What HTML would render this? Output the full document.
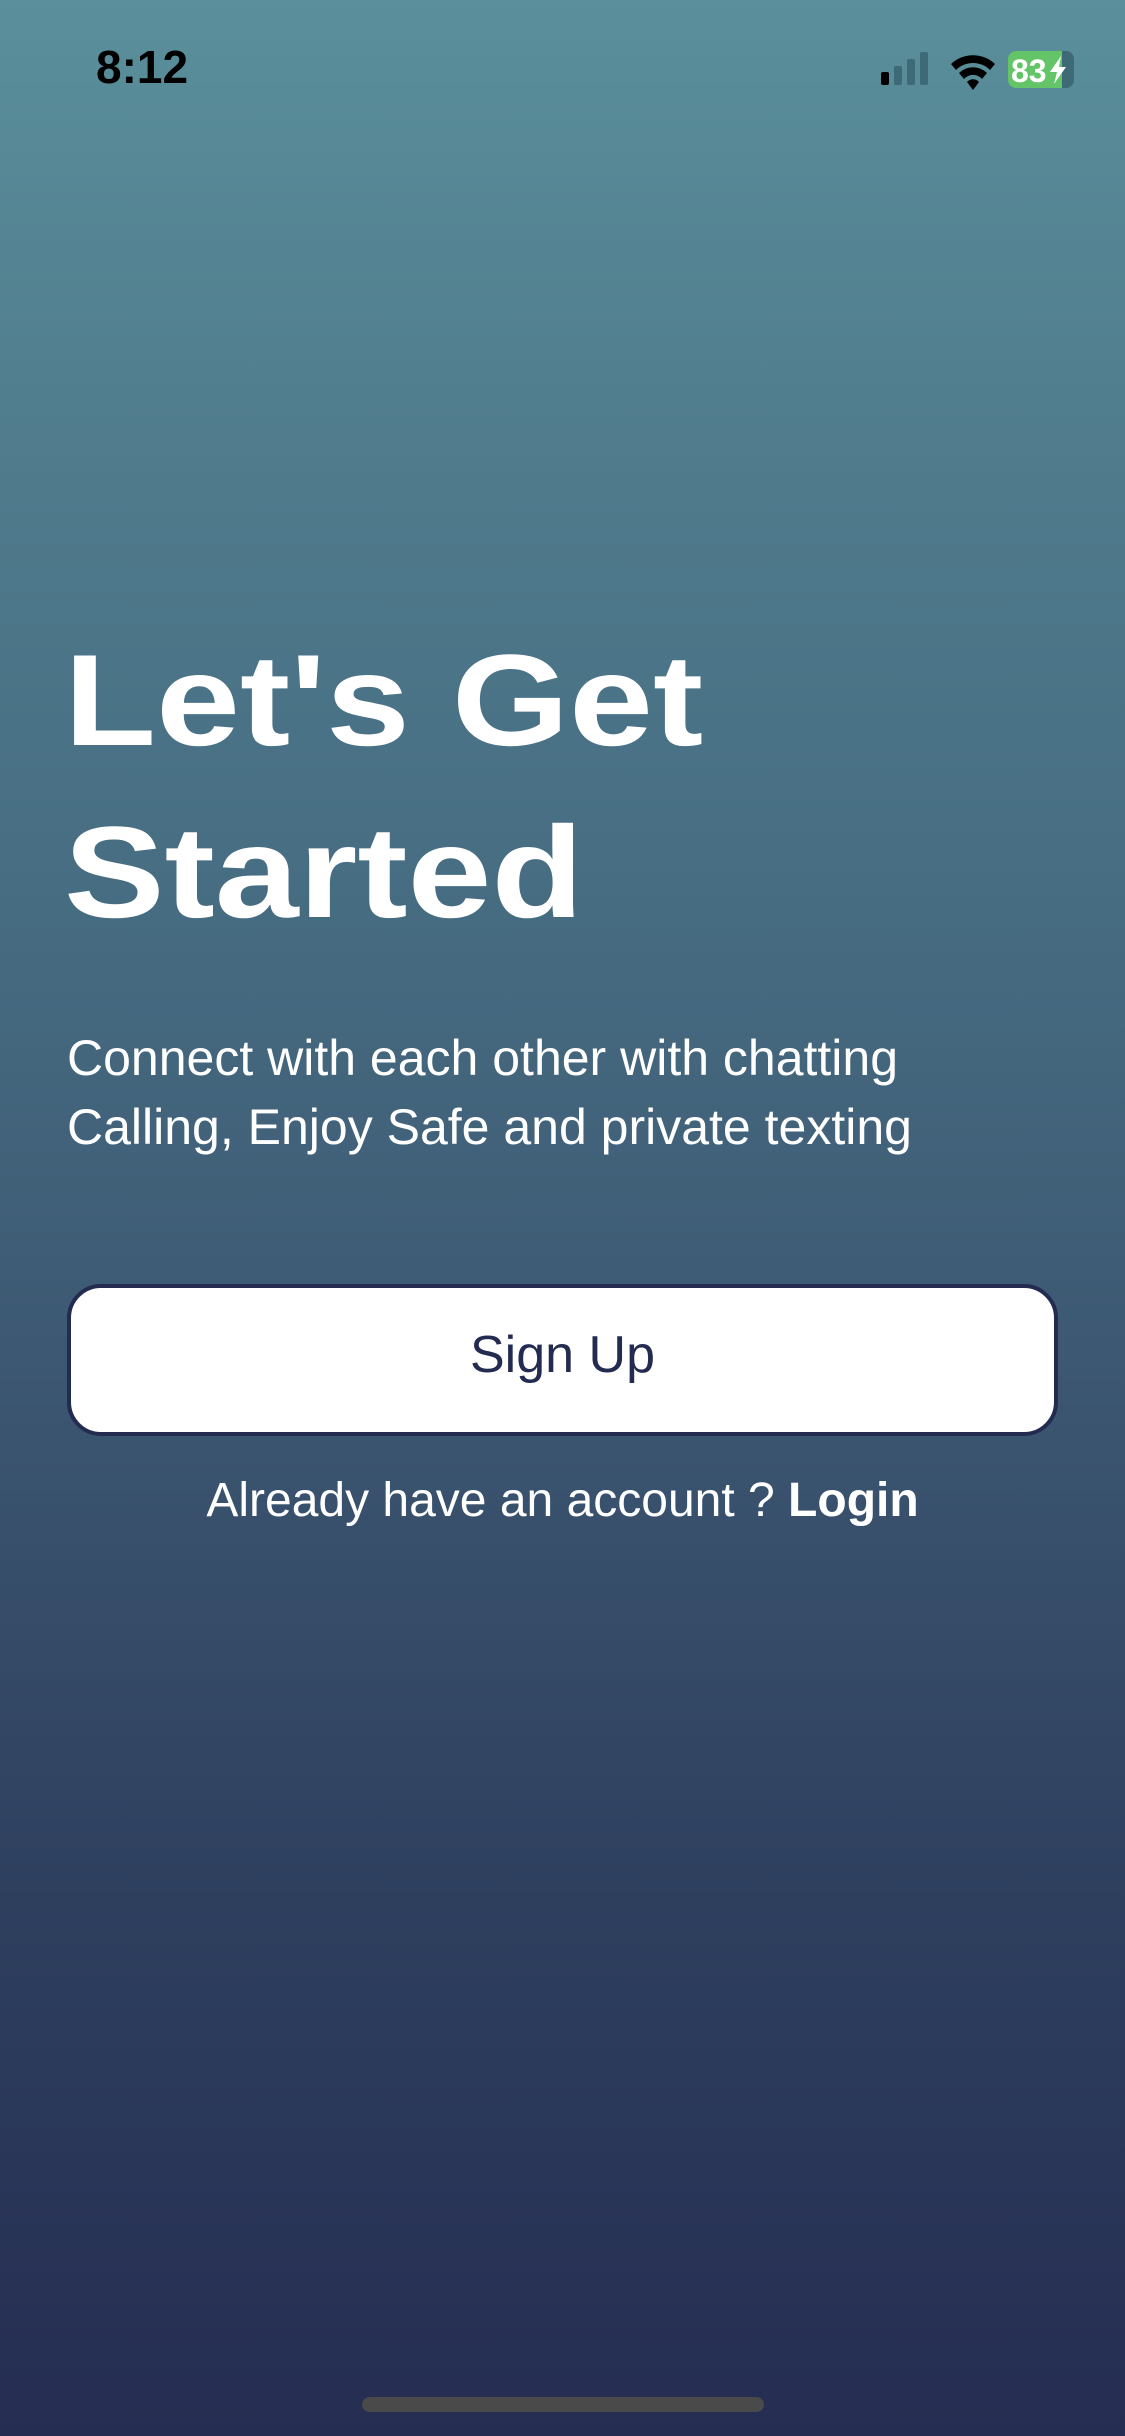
<!DOCTYPE html>
<html><head><meta charset="utf-8"><style>
html,body{margin:0;padding:0}
body{width:1125px;height:2436px;position:relative;overflow:hidden;font-family:"Liberation Sans",sans-serif;
background:linear-gradient(180deg,#5a8f9b 0%,#4f7a8c 20%,#456a80 40%,#3b5570 58%,#2e3f5e 78%,#252d52 100%);}
.a{position:absolute;white-space:nowrap}
</style></head><body>
<div class="a" style="left:96px;top:40px;font-size:46px;font-weight:bold;color:#000;">8:12</div>
<svg class="a" style="left:878px;top:50px" width="200" height="40" viewBox="0 0 200 40">
<rect x="3" y="22" width="8" height="13" rx="2" fill="#000"/>
<rect x="16" y="16" width="8" height="19" rx="2" fill="#3e6a78"/>
<rect x="29" y="9" width="8" height="26" rx="2" fill="#3e6a78"/>
<rect x="42" y="2" width="8" height="33" rx="2" fill="#3e6a78"/>
<path d="M73 14 A32 32 0 0 1 117 14 L112 20 A24 24 0 0 0 78 20 Z" fill="#000"/>
<path d="M81 23 A20 20 0 0 1 109 23 L104 29 A12 12 0 0 0 86 29 Z" fill="#000"/>
<path d="M89 32 A8 8 0 0 1 101 32 L95 40 Z" fill="#000"/>
<rect x="130" y="1" width="66" height="37" rx="8" fill="#3d6a76"/>
<rect x="130" y="1" width="54" height="37" rx="8" fill="#63c468"/>
<rect x="174" y="1" width="10" height="37" fill="#63c468"/>
<text x="133" y="32" font-family="Liberation Sans" font-weight="bold" font-size="32" fill="#fff">83</text>
<path d="M183 6 L172 22 L179 22 L176 34 L188 17 L181 17 Z" fill="#fff"/>
</svg>
<div class="a" style="left:64px;top:614px;font-size:130px;font-weight:bold;color:#fff;line-height:172px;transform:scaleX(1.16);transform-origin:left top;">Let's Get<br>Started</div>
<div class="a" style="left:67px;top:1024px;font-size:50px;color:#fff;line-height:69px;">Connect with each other with chatting<br>Calling, Enjoy Safe and private texting</div>
<div class="a" style="left:67px;top:1284px;width:991px;height:152px;box-sizing:border-box;border:4px solid #242b50;border-radius:34px;background:#fff;color:#242b50;font-size:52px;text-align:center;line-height:134px;">Sign Up</div>
<div class="a" style="left:0;width:1125px;top:1473px;text-align:center;font-size:48px;color:#fff;">Already have an account ? <b>Login</b></div>
<div class="a" style="left:362px;top:2397px;width:402px;height:15px;border-radius:8px;background:#4a4a4a;"></div>
</body></html>
